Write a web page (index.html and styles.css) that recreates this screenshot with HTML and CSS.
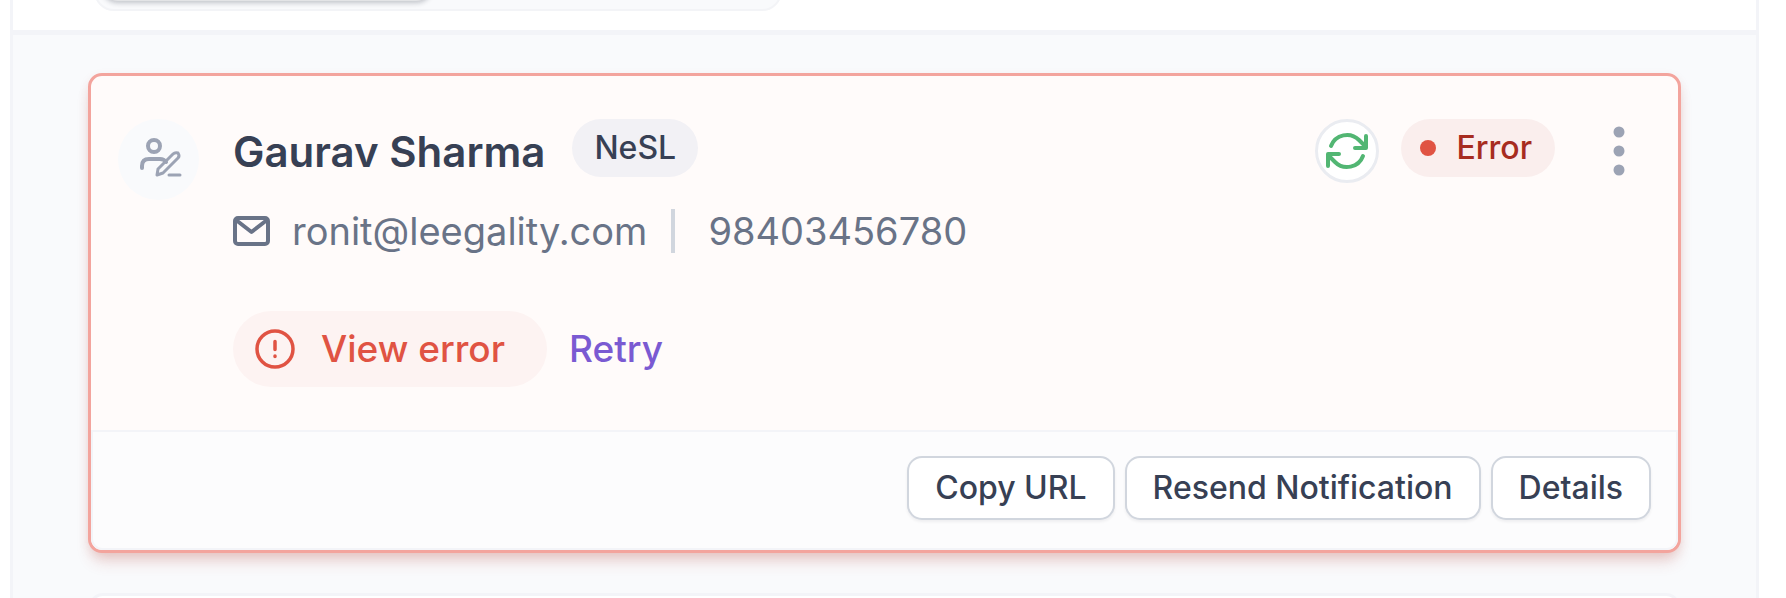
FILE: index.html
```html
<!DOCTYPE html>
<html lang="en">
<head>
<meta charset="utf-8">
<title>Invitees</title>
<link rel="stylesheet" href="styles.css">
</head>
<body>
<main class="panel">
  <header class="panel-head">
    <div class="segmented"><div class="segment"></div></div>
  </header>
  <div class="list">
    <article class="card card-error">
      <section class="card-body">
        <div class="avatar">
          <svg width="44" height="42" viewBox="0 0 44 42" fill="none" stroke="#9ca3b4" stroke-width="4" stroke-linecap="round" stroke-linejoin="round">
            <circle cx="17" cy="7" r="6"/>
            <path d="M5 29v-2q0-7 7-7h11q4 0 6 3"/>
            <path stroke-width="3" d="M20 36l1-6 15-15q2-2 5-1 2 3 0 5L26 34z"/>
            <path stroke-width="3" d="M32 36h11"/>
          </svg>
        </div>
        <div class="info">
          <div class="title-row">
            <h2 class="name">Gaurav Sharma</h2>
            <span class="tag">NeSL</span>
          </div>
          <div class="contact">
            <svg class="mail" width="37" height="30" viewBox="0 0 37 30" fill="none" stroke="#697387" stroke-width="4" stroke-linejoin="round">
              <rect x="2" y="2" width="33" height="26" rx="3"/>
              <path d="M3 4l15.500 12L34 4"/>
            </svg>
            <span class="email">ronit@leegality.com</span>
            <span class="phone">98403456780</span>
          </div>
          <div class="actions">
            <button class="view-error" type="button">
              <svg width="40" height="40" viewBox="0 0 40 40" fill="none" stroke="#e05343" stroke-width="3.500" stroke-linecap="round">
                <circle cx="20" cy="20" r="18"/>
                <path d="M20 12.500v8M20 27v.5"/>
              </svg>
              View error
            </button>
            <button class="retry" type="button">Retry</button>
          </div>
        </div>
        <div class="status-row">
          <button class="refresh" type="button" aria-label="Refresh">
            <svg width="44" height="38" viewBox="0 0 44 38" fill="none" stroke="#52b673" stroke-width="4" stroke-linecap="round" stroke-linejoin="round">
              <path d="M6 14A17 17 0 0 1 34 8l7 7M41 4v12H30"/>
              <path d="M38 24A17 17 0 0 1 10 30l-7-7M3 34V22h11"/>
            </svg>
          </button>
          <span class="status">Error</span>
          <button class="menu" type="button" aria-label="More options">
            <svg width="12" height="50" viewBox="0 0 12 50" fill="#9ca3b4">
              <circle cx="6" cy="6" r="5.500"/><circle cx="6" cy="25" r="5.500"/><circle cx="6" cy="44" r="5.500"/>
            </svg>
          </button>
        </div>
      </section>
      <footer class="card-foot">
        <button class="btn" type="button">Copy URL</button>
        <button class="btn" type="button">Resend Notification</button>
        <button class="btn" type="button">Details</button>
      </footer>
    </article>
    <article class="card card-next"></article>
  </div>
</main>
</body>
</html>
```
FILE: styles.css
```css
* {
  box-sizing: border-box;
}

html,
body {
  height: 100%;
}

body {
  margin: 0;
  background: #fff;
  color: #374054;
  font-family: Inter, "Liberation Sans", sans-serif;
}

button {
  margin: 0;
  padding: 0;
  border: 0;
  background: none;
  color: inherit;
  font: inherit;
  cursor: pointer;
}

svg {
  display: block;
  flex: none;
  overflow: visible;
}

.panel {
  height: 100%;
  margin: 0 27px 0 10px;
  overflow: hidden;
  border: solid #f3f4f8;
  border-width: 0 3px;
  background: #f9fafc;
}

.panel-head {
  padding: 0 81px 19px;
  overflow: hidden;
  border-bottom: 5px solid #f3f4f8;
  background: #fff;
}

.segmented {
  width: 688px;
  max-width: 100%;
  height: 60px;
  margin-top: -49px;
  padding: 0 6px 8px;
  border: 2px solid #f3f4f7;
  border-radius: 20px;
  background: #f9fafc;
}

.segment {
  width: 330px;
  height: 100%;
  border-radius: 16px;
  background: #e3e4e6;
  box-shadow: 0 1px 5px 1px rgba(16, 24, 40, 0.24);
}

.list {
  display: grid;
  gap: 40px;
  padding: 38px 75px 0;
}

.card {
  border-radius: 14px;
}

.card-error {
  overflow: hidden;
  border: 3px solid #f3a49d;
  background: #fffbfa;
  box-shadow: 0 12px 16px -4px rgba(180, 60, 50, 0.2), 0 4px 12px -2px rgba(180, 60, 50, 0.16);
}

.card-next {
  height: 160px;
  margin: 0 1px;
  border: 3px solid #f3f4f8;
  background: #fff;
}

.card-body {
  display: flex;
  align-items: flex-start;
  padding: 43px 43px 43px 27px;
}

.avatar {
  display: grid;
  flex: none;
  place-items: center;
  width: 81px;
  height: 81px;
  margin-right: 34px;
  border-radius: 50%;
  background: #f9fafc;
}

.info {
  flex: 1;
}

.title-row {
  display: flex;
  align-items: flex-start;
  gap: 27px;
}

.name {
  margin: 0;
  font-size: 42px;
  font-weight: 600;
  line-height: 66px;
}

.tag,
.status {
  border-radius: 30px;
  font-size: 32px;
  font-weight: 500;
  line-height: 58px;
}

.tag {
  padding: 0 22px;
  background: #f2f1f5;
}

.contact {
  display: flex;
  align-items: center;
  margin-top: 24px;
  color: #697387;
  font-size: 38px;
  line-height: 44px;
}

.email {
  margin: 0 24px 0 22px;
}

.phone {
  padding-left: 33px;
  border-left: 4px solid #d1d6de;
}

.actions {
  display: flex;
  align-items: center;
  gap: 22px;
  margin-top: 58px;
  font-size: 37px;
  font-weight: 500;
  line-height: 76px;
}

.view-error {
  display: flex;
  align-items: center;
  gap: 26px;
  padding: 0 42px 0 22px;
  border-radius: 38px;
  background: #fdf3f2;
  color: #e05343;
}

.retry {
  color: #7a5ad2;
}

.status-row {
  display: flex;
  align-items: flex-start;
  gap: 22px;
}

.refresh {
  display: grid;
  place-items: center;
  width: 64px;
  height: 64px;
  border: 3px solid #eaecf1;
  border-radius: 50%;
  background: #fff;
}

.status {
  display: flex;
  align-items: center;
  gap: 20px;
  padding: 0 23px 0 19px;
  background: #faeeed;
  color: #a72c20;
}

.status::before {
  width: 16px;
  height: 16px;
  border-radius: 50%;
  background: #e05343;
  content: "";
}

.menu {
  padding: 7px 10px 7px 36px;
}

.card-foot {
  display: flex;
  justify-content: flex-end;
  gap: 10px;
  padding: 24px 25px 28px;
  border: 2px solid #f3f4f8;
  border-radius: 0 0 11px 11px;
  background: #fcfcfd;
}

.btn {
  padding: 0 26px;
  border: 2px solid #d1d6de;
  border-radius: 15px;
  background: #fff;
  box-shadow: 0 2px 3px rgba(16, 24, 40, 0.06);
  font-size: 32px;
  font-weight: 500;
  line-height: 60px;
}
```
